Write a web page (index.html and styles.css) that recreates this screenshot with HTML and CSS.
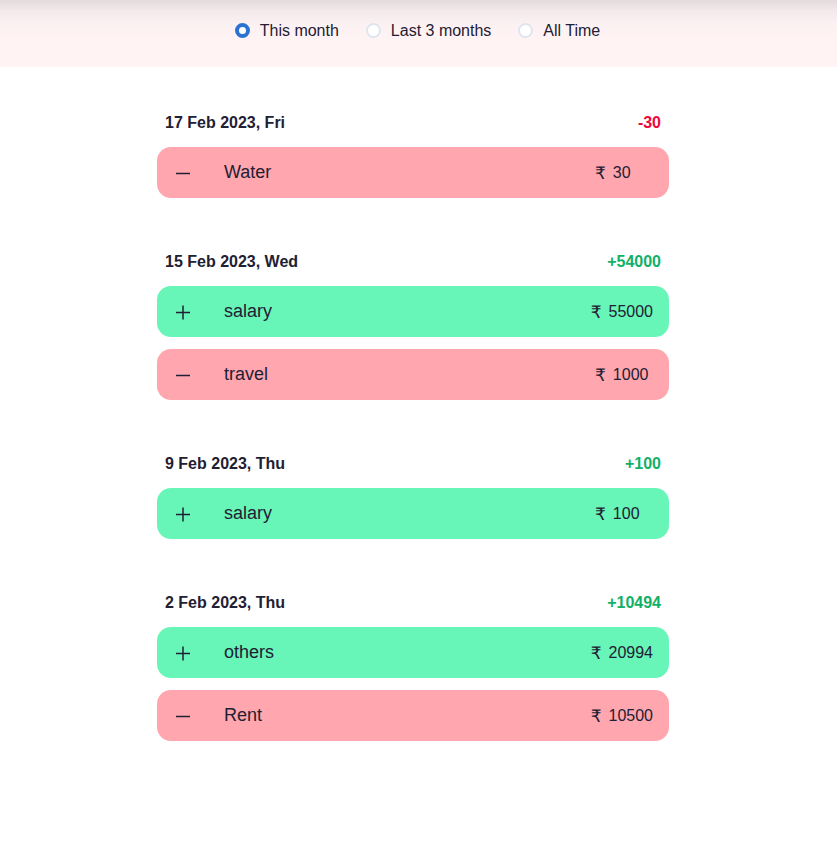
FILE: index.html
```html
<!DOCTYPE html>
<html>
<head>
<meta charset="utf-8">
<link rel="stylesheet" href="styles.css">
</head>
<body>
<header class="filter-bar">
  <label class="radio"><span class="radio-dot checked"></span>This month</label>
  <label class="radio"><span class="radio-dot"></span>Last 3 months</label>
  <label class="radio"><span class="radio-dot"></span>All Time</label>
</header>
<main class="list">
  <section class="day">
    <div class="day-head"><span class="day-date">17 Feb 2023, Fri</span><span class="day-total neg">-30</span></div>
    <div class="txn expense">
      <span class="sign"><svg width="16" height="16" viewBox="0 0 16 16"><path d="M1 8.5H15" stroke="#1f2033" stroke-width="1.5"/></svg></span>
      <span class="name">Water</span>
      <span class="amount"><span class="rupee">₹</span>30</span>
    </div>
  </section>
  <section class="day">
    <div class="day-head"><span class="day-date">15 Feb 2023, Wed</span><span class="day-total pos">+54000</span></div>
    <div class="txn income">
      <span class="sign"><svg width="16" height="16" viewBox="0 0 16 16"><path d="M1 8.5H15M8 1.5V15.5" stroke="#1f2033" stroke-width="1.5"/></svg></span>
      <span class="name">salary</span>
      <span class="amount"><span class="rupee">₹</span>55000</span>
    </div>
    <div class="txn expense">
      <span class="sign"><svg width="16" height="16" viewBox="0 0 16 16"><path d="M1 8.5H15" stroke="#1f2033" stroke-width="1.5"/></svg></span>
      <span class="name">travel</span>
      <span class="amount"><span class="rupee">₹</span>1000</span>
    </div>
  </section>
  <section class="day">
    <div class="day-head"><span class="day-date">9 Feb 2023, Thu</span><span class="day-total pos">+100</span></div>
    <div class="txn income">
      <span class="sign"><svg width="16" height="16" viewBox="0 0 16 16"><path d="M1 8.5H15M8 1.5V15.5" stroke="#1f2033" stroke-width="1.5"/></svg></span>
      <span class="name">salary</span>
      <span class="amount"><span class="rupee">₹</span>100</span>
    </div>
  </section>
  <section class="day">
    <div class="day-head"><span class="day-date">2 Feb 2023, Thu</span><span class="day-total pos">+10494</span></div>
    <div class="txn income">
      <span class="sign"><svg width="16" height="16" viewBox="0 0 16 16"><path d="M1 8.5H15M8 1.5V15.5" stroke="#1f2033" stroke-width="1.5"/></svg></span>
      <span class="name">others</span>
      <span class="amount"><span class="rupee">₹</span>20994</span>
    </div>
    <div class="txn expense">
      <span class="sign"><svg width="16" height="16" viewBox="0 0 16 16"><path d="M1 8.5H15" stroke="#1f2033" stroke-width="1.5"/></svg></span>
      <span class="name">Rent</span>
      <span class="amount"><span class="rupee">₹</span>10500</span>
    </div>
  </section>
</main>
</body>
</html>
```
FILE: styles.css
```css
html, body {
  margin: 0;
  padding: 0;
  background: #ffffff;
  font-family: "Liberation Sans", Arial, "DejaVu Sans", sans-serif;
  color: #1f2033;
}

.filter-bar {
  height: 67px;
  box-sizing: border-box;
  display: flex;
  justify-content: center;
  align-items: center;
  gap: 27px;
  padding-bottom: 6px;
  padding-right: 2px;
  background: linear-gradient(to bottom, #e2dadb 0px, #f3e9ea 10px, #fcf1f2 24px, #fff3f4 40px, #fff3f4 100%);
}

.radio {
  display: flex;
  align-items: center;
  gap: 10px;
  font-size: 16px;
  color: #1f2033;
}

.radio-dot {
  width: 15px;
  height: 15px;
  box-sizing: border-box;
  border-radius: 50%;
  border: 2px solid #dfe5ee;
  background: #ffffff;
}

.radio-dot.checked {
  border: 4px solid #2a73d2;
  background: #ffffff;
}

.list {
  width: 512px;
  margin: 45px 0 0 157px;
  display: flex;
  flex-direction: column;
  gap: 53px;
}

.day {
  display: flex;
  flex-direction: column;
  gap: 12px;
}

.day-head {
  display: flex;
  justify-content: space-between;
  align-items: center;
  height: 21px;
  padding: 0 8px;
  margin-bottom: 2px;
  font-size: 16px;
  font-weight: bold;
}

.day-date {
  color: #1f2033;
}

.neg { color: #f2053a; }
.pos { color: #12b066; }

.txn {
  height: 51px;
  border-radius: 14px;
  display: flex;
  align-items: center;
  padding: 0 16px 0 18px;
}

.txn.expense { background: #ffa6ae; }
.txn.income { background: #68f5b8; }

.sign {
  width: 49px;
  display: flex;
  align-items: center;
}

.sign svg { display: block; }

.name {
  flex: 1;
  font-size: 18px;
}

.amount {
  min-width: 58px;
  height: 20px;
  font-size: 16px;
  white-space: nowrap;
  display: flex;
  align-items: center;
}

.rupee {
  font-family: "DejaVu Sans", sans-serif;
  font-size: 17px;
  margin-right: 7px;
}
```
